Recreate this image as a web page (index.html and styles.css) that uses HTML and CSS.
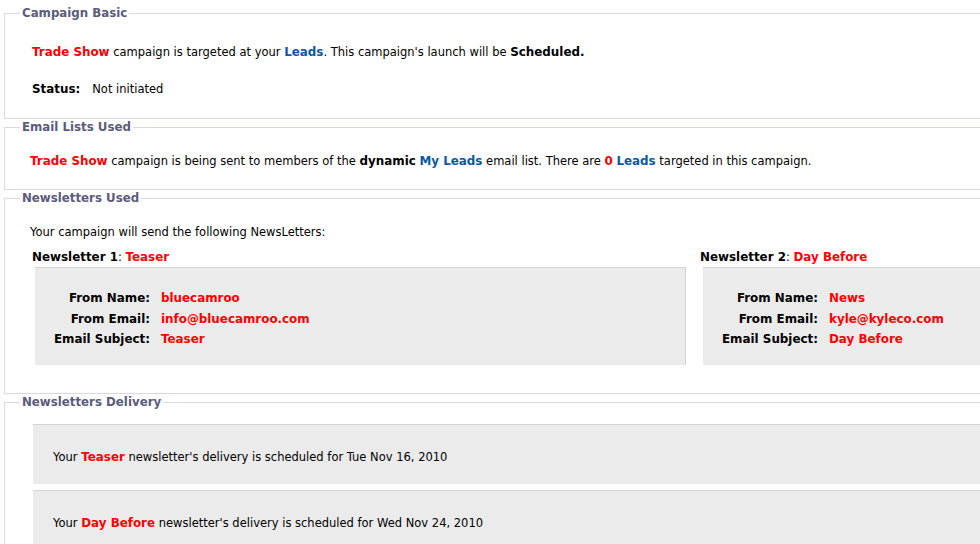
FILE: index.html
```html
<!DOCTYPE html>
<html lang="en">
<head>
<meta charset="utf-8">
<title>Campaign Summary</title>
<link rel="stylesheet" href="styles.css">
</head>
<body>
<fieldset class="panel panel-basic">
  <legend>Campaign Basic</legend>
  <p class="basic-line"><b class="red">Trade Show</b> campaign is targeted at your <b class="blue">Leads</b>. This campaign's launch will be <b>Scheduled.</b></p>
  <p class="status-line"><b class="status-label">Status:</b>Not initiated</p>
</fieldset>

<fieldset class="panel panel-lists">
  <legend>Email Lists Used</legend>
  <p class="lists-line"><b class="red">Trade Show</b> campaign is being sent to members of the <b>dynamic</b> <b class="blue">My Leads</b> email list. There are <b class="red">0</b> <b class="blue">Leads</b> targeted in this campaign.</p>
</fieldset>

<fieldset class="panel panel-news">
  <legend>Newsletters Used</legend>
  <p class="news-intro">Your campaign will send the following NewsLetters:</p>
  <div class="nl-grid">
    <div class="nl-col">
      <div class="nl-title"><b>Newsletter 1</b>: <b class="red">Teaser</b></div>
      <div class="nl-box nl-box-first">
        <div class="nl-label">From Name:</div><div class="nl-value">bluecamroo</div>
        <div class="nl-label">From Email:</div><div class="nl-value">info@bluecamroo.com</div>
        <div class="nl-label">Email Subject:</div><div class="nl-value">Teaser</div>
      </div>
    </div>
    <div class="nl-col">
      <div class="nl-title"><b>Newsletter 2</b>: <b class="red">Day Before</b></div>
      <div class="nl-box">
        <div class="nl-label">From Name:</div><div class="nl-value">News</div>
        <div class="nl-label">From Email:</div><div class="nl-value">kyle@kyleco.com</div>
        <div class="nl-label">Email Subject:</div><div class="nl-value">Day Before</div>
      </div>
    </div>
  </div>
</fieldset>

<fieldset class="panel panel-delivery">
  <legend>Newsletters Delivery</legend>
  <div class="delivery-box">Your <b class="red">Teaser</b> newsletter's delivery is scheduled for Tue Nov 16, 2010</div>
  <div class="delivery-box">Your <b class="red">Day Before</b> newsletter's delivery is scheduled for Wed Nov 24, 2010</div>
</fieldset>
</body>
</html>
```

FILE: styles.css
```css
html, body {
  margin: 0;
  padding: 0;
  background: #ffffff;
  overflow: hidden;
}
body {
  font-family: "DejaVu Sans", Verdana, sans-serif;
  font-size: 11.5px;
  color: #000000;
}
b {
  font-weight: bold;
  font-size: 11.9px;
  line-height: 1;
}
.red { color: #ff0000; }
.blue { color: #0a58a6; }

.panel {
  margin: 1px -30px 0 4px;
  border: 1px solid #d8d7e3;
  padding: 0;
  min-width: 0;
}
.panel-basic { margin-top: 6px; }

legend {
  margin-left: 15px;
  padding: 0 2px;
  font-weight: bold;
  font-size: 11.8px;
  line-height: 14px;
  color: #5b5b7d;
}

p { margin: 0; line-height: 18px; }

.basic-line { margin: 22.5px 0 0 27px; }
.status-line { margin: 19.5px 0 20px 27px; }
.status-label { margin-right: 12px; }

.lists-line { margin: 17.5px 0 19.5px 25px; }

.news-intro { margin: 18px 0 0 25px; }
.nl-grid {
  display: grid;
  grid-template-columns: 654px 1fr;
  column-gap: 14px;
  padding-left: 27px;
  margin-top: 7px;
  padding-bottom: 28px;
}
.nl-title {
  line-height: 18px;
  margin-bottom: 1px;
}
.nl-box {
  margin-left: 3px;
  background: #ebebeb;
  border-top: 1px solid #d4d4d4;
  padding: 20px 0 15.5px 0;
  display: grid;
  grid-template-columns: 115px 1fr;
  column-gap: 11px;
  grid-auto-rows: 20.5px;
  align-items: center;
  font-weight: bold;
  font-size: 11.9px;
}
.nl-box-first { border-right: 1px solid #d4d4d4; }
.nl-label { text-align: right; color: #000000; }
.nl-value { color: #ff0000; }

.delivery-box {
  margin: 15px 0 0 28px;
  background: #ebebeb;
  border-top: 1px solid #d4d4d4;
  padding: 22.5px 0 18.5px 20px;
  line-height: 18px;
}
.delivery-box + .delivery-box { margin-top: 6px; }
```
